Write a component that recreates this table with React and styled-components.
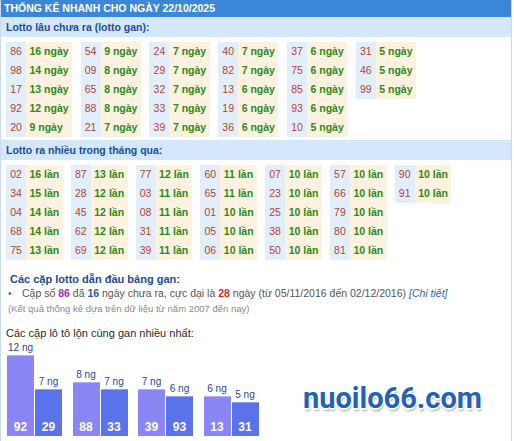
import styled, { createGlobalStyle } from "styled-components";

const GlobalStyle = createGlobalStyle`
  body {
    margin: 0;
    background: #fff;
    font-family: "Liberation Sans", Arial, sans-serif;
  }
`;

const ganCols = [
  [["86", 16], ["98", 14], ["17", 13], ["92", 12], ["20", 9]],
  [["54", 9], ["09", 8], ["65", 8], ["88", 8], ["21", 7]],
  [["24", 7], ["29", 7], ["32", 7], ["33", 7], ["39", 7]],
  [["40", 7], ["82", 7], ["13", 6], ["19", 6], ["36", 6]],
  [["37", 6], ["75", 6], ["85", 6], ["93", 6], ["10", 5]],
  [["31", 5], ["46", 5], ["99", 5]],
];

const hotCols = [
  [["02", 16], ["34", 15], ["04", 14], ["68", 14], ["75", 13]],
  [["87", 13], ["28", 12], ["45", 12], ["62", 12], ["69", 12]],
  [["77", 12], ["03", 11], ["08", 11], ["31", 11], ["39", 11]],
  [["60", 11], ["65", 11], ["01", 10], ["05", 10], ["06", 10]],
  [["07", 10], ["23", 10], ["25", 10], ["38", 10], ["50", 10]],
  [["57", 10], ["66", 10], ["79", 10], ["80", 10], ["81", 10]],
  [["90", 10], ["91", 10]],
];

const pairs = [
  [["92", 12], ["29", 7]],
  [["88", 8], ["33", 7]],
  [["39", 7], ["93", 6]],
  [["13", 6], ["31", 5]],
];

const StatTable = ({ cols, unit, gap }) => (
  <Groups $gap={gap}>
    {cols.map((col, i) => (
      <Group key={i}>
        <tbody>
          {col.map(([num, count]) => (
            <tr key={num}>
              <NumCell>{num}</NumCell>
              <CountCell>
                {count} {unit}
              </CountCell>
            </tr>
          ))}
        </tbody>
      </Group>
    ))}
  </Groups>
);

const App = () => {
  return (
    <>
      <GlobalStyle />
      <Page>
        <Header>THỐNG KÊ NHANH CHO NGÀY 22/10/2025</Header>
        <Band>Lotto lâu chưa ra (lotto gan):</Band>
        <StatTable cols={ganCols} unit="ngày" gap={8.5} />
        <Band>Lotto ra nhiều trong tháng qua:</Band>
        <StatTable cols={hotCols} unit="lần" gap={8} />

        <LeadTitle>Các cặp lotto dẫn đầu bảng gan:</LeadTitle>
        <LeadLine>
          <Bullet>•</Bullet>
          Cặp số <Strong $color="#9a2fc2">86</Strong> đã{" "}
          <Strong $color="#2559b5">16</Strong> ngày chưa ra, cực đại là{" "}
          <Strong $color="#e01f1f">28</Strong> ngày (từ 05/11/2016 đến
          02/12/2016) <DetailLink>[Chi tiết]</DetailLink>
        </LeadLine>
        <Note>(Kết quả thống kê dựa trên dữ liệu từ năm 2007 đến nay)</Note>

        <ChartTitle>Các cặp lô tô lộn cùng gan nhiều nhất:</ChartTitle>
        <Chart>
          {pairs.map((pair, i) => (
            <Pair key={i}>
              {pair.map(([num, days], j) => (
                <BarColumn key={num}>
                  <BarLabel>{days} ng</BarLabel>
                  <Bar $second={j === 1} style={{ height: days * 6.75 }}>
                    {num}
                  </Bar>
                </BarColumn>
              ))}
            </Pair>
          ))}
        </Chart>

        <Logo>nuoilo66.com</Logo>
      </Page>
    </>
  );
};

export default App;

const Page = styled.div`
  position: relative;
  width: 512px;
  height: 441px;
  box-sizing: border-box;
  border-left: 1px solid #c9d9ee;
  border-right: 1px solid #c9d9ee;
  overflow: hidden;
  color: #333;
`;

const Header = styled.div`
  margin: 0 -2px 0 -1px;
  height: 17px;
  padding-left: 4px;
  background: #3b86d9;
  color: #fff;
  font-size: 10.5px;
  font-weight: bold;
  line-height: 17px;
  white-space: nowrap;
`;

const Band = styled.div`
  margin: 0 -2px 0 -1px;
  height: 20px;
  padding-left: 6px;
  background: #d5e7fb;
  color: #1a4d9c;
  font-size: 10.5px;
  font-weight: bold;
  line-height: 20px;
`;

const Groups = styled.div`
  display: flex;
  align-items: flex-start;
  gap: ${(p) => p.$gap}px;
  padding: 5px 0 3px 5px;
`;

const Group = styled.table`
  border-collapse: collapse;
  border-spacing: 0;

  td {
    height: 19px;
    padding: 0;
    font-size: 10.5px;
    line-height: 19px;
    white-space: nowrap;
  }
`;

const NumCell = styled.td`
  width: 20px;
  text-align: center;
  background: #e3eefb;
  color: #b4432f;
`;

const CountCell = styled.td`
  && {
    padding: 0 3.5px;
  }
  background: #fdf1df;
  color: #2b8a1d;
  font-weight: bold;
`;

const LeadTitle = styled.div`
  margin-top: 9px;
  padding-left: 9px;
  color: #1c4a9c;
  font-size: 11px;
  font-weight: bold;
  line-height: 14px;
`;

const LeadLine = styled.div`
  padding-left: 7px;
  color: #555;
  font-size: 10.5px;
  line-height: 15px;
  white-space: nowrap;
`;

const Bullet = styled.span`
  display: inline-block;
  width: 14px;
  color: #666;
`;

const Strong = styled.b`
  color: ${(p) => p.$color};
`;

const DetailLink = styled.i`
  color: #2f62c8;
`;

const Note = styled.div`
  padding-left: 7px;
  color: #8a8a8a;
  font-size: 9.5px;
  line-height: 15px;
`;

const ChartTitle = styled.div`
  margin-top: 10px;
  padding-left: 5px;
  color: #2a2a2a;
  font-size: 11px;
  line-height: 14px;
`;

const Chart = styled.div`
  display: flex;
  align-items: flex-end;
  gap: 10.5px;
  height: 96px;
  padding-left: 6px;
`;

const Pair = styled.div`
  display: flex;
  align-items: flex-end;
  gap: 1px;
`;

const BarColumn = styled.div`
  display: flex;
  flex-direction: column;
  align-items: center;
  width: 27px;
`;

const BarLabel = styled.div`
  margin-bottom: 1px;
  color: #2347a0;
  font-size: 10px;
  line-height: 12px;
  white-space: nowrap;
`;

const Bar = styled.div`
  display: flex;
  align-items: flex-end;
  justify-content: center;
  width: 100%;
  box-sizing: border-box;
  padding-bottom: 1px;
  background: ${(p) => (p.$second ? "#5b73ea" : "#8b86f5")};
  border-top: 1px solid ${(p) => (p.$second ? "#8fa0f2" : "#b2aef9")};
  color: #fff;
  font-size: 12px;
  font-weight: bold;
  line-height: 15px;
`;

const Logo = styled.div`
  position: absolute;
  left: 302px;
  top: 384px;
  color: #1f62b6;
  font-family: Roboto, "Liberation Sans", sans-serif;
  font-size: 29px;
  font-weight: 700;
  line-height: 29px;
  text-shadow: -1px -1px 0 #fff, 1px -1px 0 #fff, -1px 1px 0 #fff,
    1px 1px 0 #fff, 0 2px 0 #fff, 1px 3px 2px rgba(0, 0, 0, 0.35);
`;
